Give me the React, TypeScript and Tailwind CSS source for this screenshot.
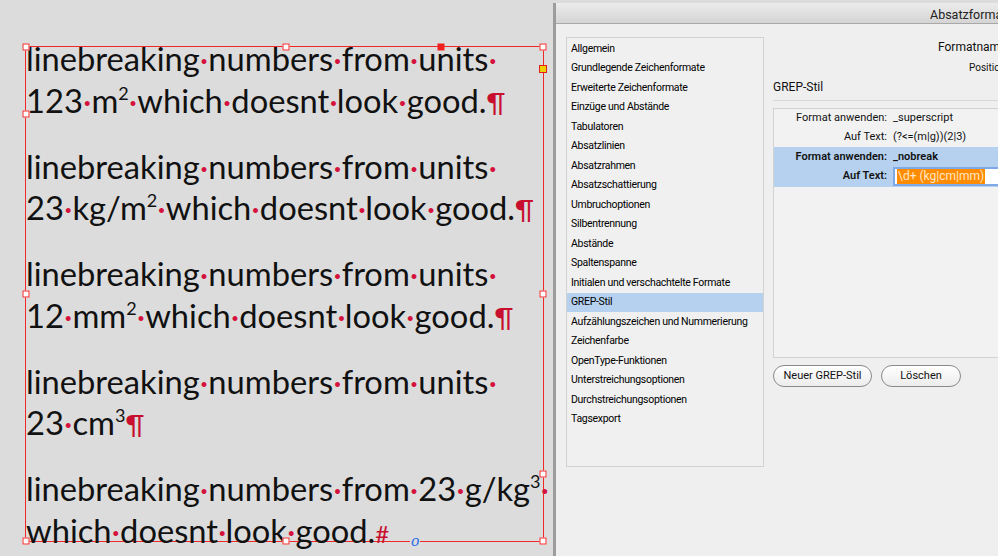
import React from "react";

const dot = <span className="text-[#d4123c]">·</span>;

type Seg = string | [string, string];

// superscript figure, small and raised like InDesign's
const Sup = ({ n }: { n: string }) => (
  <span className="text-[18px] leading-[0] align-[13px]">{n}</span>
);

// a line of the text frame; spaces shown as red dots
const Line = ({ parts, end }: { parts: Seg[]; end?: React.ReactNode }) => (
  <div className="whitespace-nowrap">
    {parts.map((p, i) => (
      <React.Fragment key={i}>
        {i > 0 && dot}
        {typeof p === "string" ? (
          p
        ) : (
          <>
            {p[0]}
            <Sup n={p[1]} />
          </>
        )}
      </React.Fragment>
    ))}
    {end}
  </div>
);

const pilcrow = <span className="text-[#c8102e] text-[27px] leading-[0]">¶</span>;

const Handle = ({ className }: { className: string }) => (
  <div
    className={`absolute w-[7px] h-[7px] -translate-x-1/2 -translate-y-1/2 border border-[#f02828] bg-white ${className}`}
  />
);

const menu = [
  "Allgemein",
  "Grundlegende Zeichenformate",
  "Erweiterte Zeichenformate",
  "Einzüge und Abstände",
  "Tabulatoren",
  "Absatzlinien",
  "Absatzrahmen",
  "Absatzschattierung",
  "Umbruchoptionen",
  "Silbentrennung",
  "Abstände",
  "Spaltenspanne",
  "Initialen und verschachtelte Formate",
  "GREP-Stil",
  "Aufzählungszeichen und Nummerierung",
  "Zeichenfarbe",
  "OpenType-Funktionen",
  "Unterstreichungsoptionen",
  "Durchstreichungsoptionen",
  "Tagsexport",
];

const pill =
  "h-[22px] rounded-full border border-[#8a8a8a] bg-gradient-to-b from-white to-[#ececec] flex items-center justify-center";

export default function App() {
  return (
    <div className="w-[998px] h-[556px] overflow-hidden flex bg-[#dcdcdc]">
      {/* layout canvas */}
      <div className="w-[553px] shrink-0 pl-[25px] pt-[46px]">
        <div className="relative w-[519px] h-[496px] border border-[#f02828]">
          <div className="mt-[-9px] font-['Lato',sans-serif] text-[32.7px] leading-[41.75px] text-[#111]">
            <div className="mb-[24px]">
              <Line parts={["linebreaking", "numbers", "from", "units", ""]} />
              <Line parts={["123", ["m", "2"], "which", "doesnt", "look", "good."]} end={pilcrow} />
            </div>
            <div className="mb-[24px]">
              <Line parts={["linebreaking", "numbers", "from", "units", ""]} />
              <Line parts={["23", ["kg/m", "2"], "which", "doesnt", "look", "good."]} end={pilcrow} />
            </div>
            <div className="mb-[24px]">
              <Line parts={["linebreaking", "numbers", "from", "units", ""]} />
              <Line parts={["12", ["mm", "2"], "which", "doesnt", "look", "good."]} end={pilcrow} />
            </div>
            <div className="mb-[24px]">
              <Line parts={["linebreaking", "numbers", "from", "units", ""]} />
              <Line parts={["23", ["cm", "3"]]} end={pilcrow} />
            </div>
            <div>
              <Line parts={["linebreaking", "numbers", "from", "23", ["g/kg", "3"], ""]} />
              <Line
                parts={["which", "doesnt", "look", "good."]}
                end={<span className="text-[#c8102e] text-[24px] leading-[0]">#</span>}
              />
            </div>
          </div>

          <Handle className="left-0 top-0" />
          <Handle className="left-[260px] top-0" />
          <div className="absolute left-[415px] top-0 w-[7px] h-[7px] -translate-x-1/2 -translate-y-1/2 bg-[#f02020]" />
          <Handle className="left-full top-0" />
          <div className="absolute left-full top-[22px] w-[8px] h-[8px] -translate-x-1/2 -translate-y-1/2 border border-[#e02020] bg-[#f0d000]" />
          <Handle className="left-0 top-[67px]" />
          <Handle className="left-0 top-[247px]" />
          <Handle className="left-full top-[247px]" />
          <Handle className="left-full top-[427px]" />
          <Handle className="left-0 top-full" />
          <Handle className="left-[260px] top-full" />
          <Handle className="left-full top-full" />
          <div className="absolute left-[384px] top-full -translate-y-1/2 font-['DejaVu_Serif',serif] italic text-[14px] leading-none text-[#2a6ee8] bg-[#dcdcdc] px-[1px]">
            o
          </div>
        </div>
      </div>

      {/* dialog */}
      <div className="flex-1 mt-[3px] flex flex-col bg-[#efefef] border-l-[3px] border-[#9c9c9c] font-['Roboto',sans-serif] text-[#111]">
        <div className="h-[21px] shrink-0 bg-gradient-to-b from-[#ececec] to-[#d4d4d4] border-b border-[#a8a8a8] flex items-center pt-[5px] pl-[374px] text-[12.5px] text-[#222]">
          <span className="whitespace-nowrap">Absatzformatoptionen</span>
        </div>

        <div className="flex pt-[13px] pl-[10px]">
          <div className="w-[198px] h-[430px] shrink-0 border border-[#d2d2d2] bg-[#f0f0f0] pt-[1px]">
            {menu.map((m) => (
              <div
                key={m}
                className={`h-[19.5px] pl-[4px] flex items-center text-[10.5px] tracking-[-0.3px] text-black whitespace-nowrap ${
                  m === "GREP-Stil" ? "bg-[#b5d1ef]" : ""
                }`}
              >
                {m}
              </div>
            ))}
          </div>

          <div className="flex-1 pl-[9px] min-w-0">
            <div className="h-[20px] flex items-center pl-[165px] text-[12px] whitespace-nowrap">Formatname</div>
            <div className="h-[20px] flex items-center pl-[196px] text-[10px] whitespace-nowrap">Position</div>
            <div className="h-[20px] flex items-center text-[12px]">GREP-Stil</div>
            <div className="mt-[3px] border-t border-[#d6d6d6]" />
            <div className="mt-[7px] h-[250px] border border-[#d2d2d2] bg-[#f2f2f2] text-[11px]">
              <div className="h-[19px] flex items-center">
                <span className="w-[113px] text-right">Format anwenden:</span>
                <span className="pl-[6px]">_superscript</span>
              </div>
              <div className="h-[19px] flex items-center">
                <span className="w-[113px] text-right">Auf Text:</span>
                <span className="pl-[6px]">(?&lt;=(m|g))(2|3)</span>
              </div>
              <div className="bg-[#b5d1ef] font-semibold pt-[1px] pb-[1px]">
                <div className="h-[19px] flex items-center">
                  <span className="w-[113px] text-right">Format anwenden:</span>
                  <span className="pl-[6px]">_nobreak</span>
                </div>
                <div className="h-[19px] flex items-center">
                  <span className="w-[113px] text-right">Auf Text:</span>
                  <div className="ml-[6px] flex-1 h-[19px] bg-white border-2 border-[#7fa9e6] flex items-center pl-[2px] font-normal">
                    <span className="bg-[#ff8c00] text-[#ffe6c8] px-[1px] text-[12px] leading-[15px]">\d+ (kg|cm|mm)</span>
                  </div>
                </div>
              </div>
            </div>
            <div className="mt-[7px] flex gap-[9px] text-[11px]">
              <div className={`w-[99px] ${pill}`}>Neuer GREP-Stil</div>
              <div className={`w-[80px] ${pill}`}>Löschen</div>
            </div>
          </div>
        </div>
      </div>
    </div>
  );
}
